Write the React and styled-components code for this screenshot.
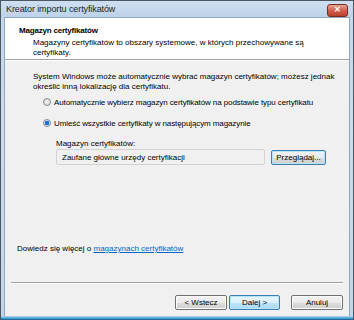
import React from "react";
import styled, { createGlobalStyle } from "styled-components";

const Global = createGlobalStyle`
  html, body { margin: 0; padding: 0; background: #fff; }
  body { font-family: "Liberation Sans", Arial, sans-serif; font-size: 8px; color: #000; }
  #root { width: 354px; height: 320px; }
`;

const Window = styled.div`
  box-sizing: border-box;
  width: 354px;
  height: 320px;
  display: flex;
  flex-direction: column;
  border: 1px solid #4a5866;
  border-bottom: none;
  background: linear-gradient(180deg, #c4d7ec 0%, #cddcec 40%, #c3d5e8 100%);
`;

const TitleBar = styled.div`
  height: 16px;
  display: flex;
  align-items: center;
  justify-content: space-between;
  padding: 0 5px 0 5px;
  background: linear-gradient(180deg, #cfdff0 0%, #bdd3ea 100%);
`;

const Title = styled.span`
  font-size: 9px;
  color: #1e1e1e;
  letter-spacing: -0.1px;
`;

const Close = styled.div`
  width: 19px;
  height: 11px;
  margin-top: 2px;
  border-radius: 3px;
  border: 1px solid #7a2b22;
  background: linear-gradient(180deg, #e8a494 0%, #d0614e 50%, #b8412d 100%);
  display: flex;
  align-items: center;
  justify-content: center;
  color: #fff;
  font-size: 8px;
  font-weight: bold;
  line-height: 1;
`;

const Client = styled.div`
  flex: 1;
  display: flex;
  flex-direction: column;
  margin: 0 3px 0 3px;
  border: 1px solid #8fa6bf;
  border-bottom: none;
  background: #f0f0f0;
`;

const Header = styled.div`
  height: 42px;
  background: #fff;
  padding: 8px 0 0 14px;
  box-sizing: border-box;
  border-bottom: 1px solid #a0a0a0;
  box-shadow: 0 1px 0 #fff;
`;

const HeaderTitle = styled.div`
  font-weight: bold;
  font-size: 8px;
  line-height: 10px;
  letter-spacing: -0.2px;
`;

const HeaderText = styled.div`
  margin-top: 2px;
  padding-left: 14px;
  line-height: 10px;
  white-space: nowrap;
`;

const Body = styled.div`
  flex: 1;
  display: flex;
  flex-direction: column;
  padding: 12px 0 0 28px;
`;

const Para = styled.div`
  line-height: 10px;
  white-space: nowrap;
`;

const RadioRow = styled.div`
  display: flex;
  align-items: center;
  gap: 3px;
  margin-left: 10px;
  margin-top: ${(p) => p.$mt}px;
  height: 10px;
  white-space: nowrap;
  letter-spacing: -0.1px;
`;

const RadioCircle = styled.span`
  box-sizing: border-box;
  width: 8px;
  height: 8px;
  border-radius: 50%;
  border: 1px solid #8c8c8c;
  background: radial-gradient(circle, ${(p) => (p.$on ? "#1e6fc8 0 2px, #cfe2f6 2.5px" : "#f4f4f4 0, #dcdcdc 3px")});
`;

const StoreBlock = styled.div`
  margin-left: 23px;
  margin-top: 11px;
  display: flex;
  flex-direction: column;
`;

const StoreLabel = styled.div`
  line-height: 10px;
`;

const StoreRow = styled.div`
  display: flex;
  align-items: flex-start;
  gap: 6px;
`;

const Field = styled.div`
  box-sizing: border-box;
  width: 209px;
  height: 16px;
  border: 1px solid #d2d2d2;
  border-radius: 2px;
  background: #f0f0f0;
  padding: 0 0 0 5px;
  display: flex;
  align-items: center;
`;

const Btn = styled.button`
  box-sizing: border-box;
  font-family: "Liberation Sans", Arial, sans-serif;
  font-size: 8px;
  color: #000;
  padding: 0;
  height: ${(p) => p.$h || 15}px;
  width: ${(p) => p.$w}px;
  margin-top: ${(p) => p.$mt || 0}px;
  border-radius: 2px;
  border: 1px solid ${(p) => (p.$focus ? "#3c7fb1" : "#707070")};
  background: ${(p) =>
    p.$default
      ? "linear-gradient(180deg, #eaf6fd 0%, #d9f0fc 50%, #bee6fd 51%, #a7d9f5 100%)"
      : "linear-gradient(180deg, #f2f2f2 0%, #ebebeb 50%, #dddddd 51%, #cfcfcf 100%)"};
  box-shadow: inset 0 0 0 1px ${(p) => (p.$focus ? "#b9e3f9" : "#fcfcfc")};
`;

const Spacer = styled.div`
  flex: 1;
`;

const LinkLine = styled.div`
  margin-left: -16px;
  margin-bottom: 28px;
  line-height: 10px;
`;

const Link = styled.a`
  color: #0066cc;
  text-decoration: underline;
`;

const Footer = styled.div`
  display: flex;
  flex-direction: column;
  padding: 0 6px 6px 6px;
`;

const Separator = styled.div`
  height: 1px;
  background: #a0a0a0;
  border-bottom: 1px solid #fff;
`;

const ButtonRow = styled.div`
  display: flex;
  justify-content: flex-end;
  gap: 2px;
  margin-top: 11px;
`;

const Gap = styled.div`
  width: 7px;
`;

const BottomEdge = styled.div`
  height: 4px;
  background: linear-gradient(180deg, #c3d5e8 0%, #3aa0d8 60%, #1b4f7a 100%);
`;

export default function App() {
  return (
    <>
      <Global />
      <Window>
        <TitleBar>
          <Title>Kreator importu certyfikatów</Title>
          <Close>✕</Close>
        </TitleBar>
        <Client>
          <Header>
            <HeaderTitle>Magazyn certyfikatów</HeaderTitle>
            <HeaderText>
              Magazyny certyfikatów to obszary systemowe, w których przechowywane są
              <br />
              certyfikaty.
            </HeaderText>
          </Header>
          <Body>
            <Para>
              System Windows może automatycznie wybrać magazyn certyfikatów; możesz jednak
              <br />
              określić inną lokalizację dla certyfikatu.
            </Para>
            <RadioRow $mt={5}>
              <RadioCircle />
              <span>Automatycznie wybierz magazyn certyfikatów na podstawie typu certyfikatu</span>
            </RadioRow>
            <RadioRow $mt={11}>
              <RadioCircle $on />
              <span>Umieść wszystkie certyfikaty w następującym magazynie</span>
            </RadioRow>
            <StoreBlock>
              <StoreLabel>Magazyn certyfikatów:</StoreLabel>
              <StoreRow>
                <Field>Zaufane główne urzędy certyfikacji</Field>
                <Btn $w={55} $mt={1} $focus>Przeglądaj...</Btn>
              </StoreRow>
            </StoreBlock>
            <Spacer />
            <LinkLine>
              Dowiedz się więcej o <Link>magazynach certyfikatów</Link>
            </LinkLine>
          </Body>
          <Footer>
            <Separator />
            <ButtonRow>
              <Btn $w={52}>&lt; Wstecz</Btn>
              <Btn $w={51} $default $focus>Dalej &gt;</Btn>
              <Gap />
              <Btn $w={52}>Anuluj</Btn>
            </ButtonRow>
          </Footer>
        </Client>
        <BottomEdge />
      </Window>
    </>
  );
}
